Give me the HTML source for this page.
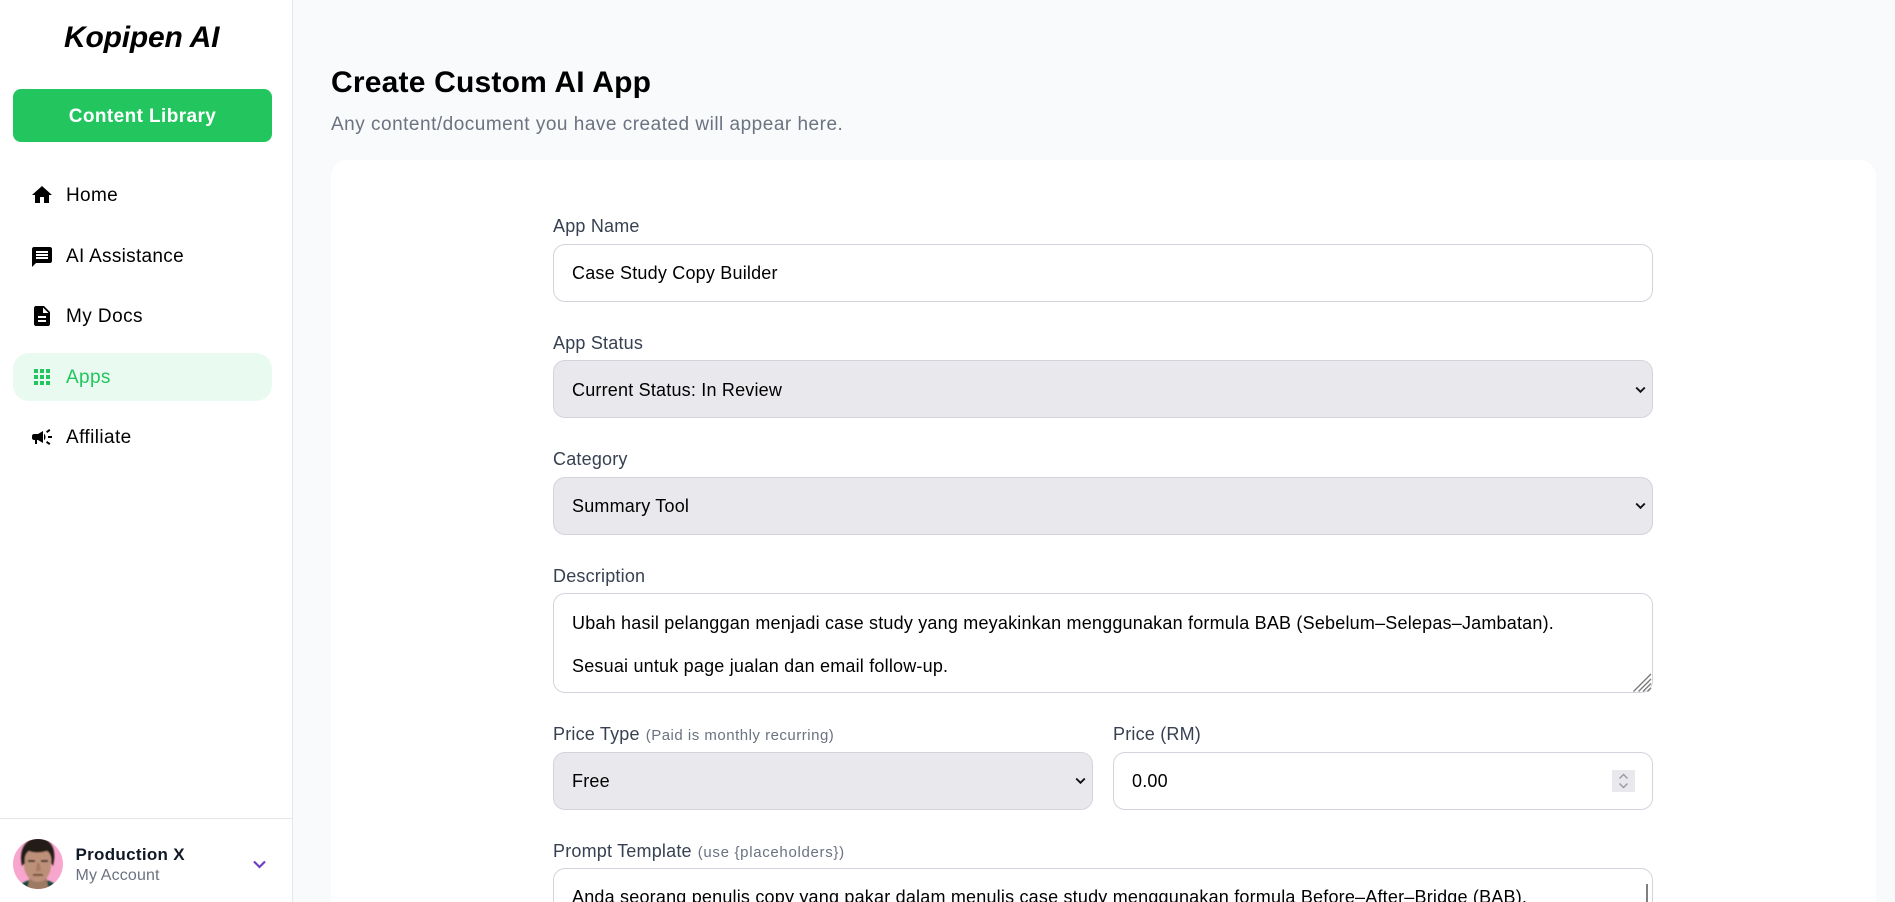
<!DOCTYPE html>
<html lang="en">
<head>
<meta charset="utf-8">
<title>Create Custom AI App</title>
<style>
*{box-sizing:border-box}
html,body{margin:0;padding:0;width:1895px;height:902px;overflow:hidden;background:#f9fafb;font-family:"Liberation Sans",Arial,sans-serif;color:#000}
#root{position:relative;width:1895px;height:902px;overflow:hidden;background:#f9fafb}
.abs,.t{position:absolute}
.t{white-space:nowrap;line-height:1}
aside{position:absolute;left:0;top:0;width:293px;height:902px;background:#fff;border-right:1px solid #e5e7eb}
.logo{left:64px;top:23px;font-size:30px;font-weight:bold;font-style:italic;letter-spacing:-.2px;line-height:30px}
.btn{position:absolute;left:13px;top:89px;width:259px;height:53px;background:#22c55e;border-radius:8px;color:#fff;font-weight:bold;font-size:19px;letter-spacing:.41px;text-align:center;line-height:55px}
.pill{position:absolute;left:13px;top:353px;width:259px;height:48px;background:#e9faf0;border-radius:16px}
.nav{font-size:19px;left:66px;line-height:20px}
svg.i{position:absolute;left:30px;width:24px;height:24px;fill:#000}
.foot{position:absolute;left:0;top:818px;width:292px;border-top:1px solid #e5e7eb}
.card{position:absolute;left:331px;top:160px;width:1545px;height:742px;background:#fff;border-radius:16px 16px 0 0}
.lbl{font-size:18px;color:#374151;line-height:20px;letter-spacing:.2px}
.lbl span{font-size:15px;color:#6b7280;letter-spacing:.5px;margin-left:6px}
input,select,textarea{position:absolute;font-family:"Liberation Sans",Arial,sans-serif;font-size:18px;color:#000;border:1px solid #d1d5db;border-radius:12px;letter-spacing:.2px;margin:0;outline:0}
input{background:#fff;padding:0 18px;height:58px}
select{background:#e9e9ed;padding:0 18px;height:58px;-webkit-appearance:none;appearance:none}
textarea{background:#fff;padding:19px 18px;line-height:21.5px;overflow:hidden;resize:none}
input[type=number]::-webkit-inner-spin-button,input[type=number]::-webkit-outer-spin-button{-webkit-appearance:none;margin:0}
.chev{position:absolute;width:11px;height:8px}
</style>
</head>
<body>
<div id="root">
<aside>
  <div class="t logo">Kopipen AI</div>
  <div class="btn">Content Library</div>
  <div class="pill"></div>

  <svg class="i" style="top:183px" viewBox="0 0 24 24"><path d="M10 20v-6h4v6h5v-8h3L12 3 2 12h3v8z"/></svg>
  <div class="t nav" style="top:186px;letter-spacing:.33px">Home</div>

  <svg class="i" style="top:245px" viewBox="0 0 24 24"><path d="M20 2H4c-1.100 0-1.990.9-1.990 2L2 22l4-4h14c1.100 0 2-.9 2-2V4c0-1.100-.9-2-2-2zm-2 12H6v-2h12v2zm0-3H6V9h12v2zm0-3H6V6h12v2z"/></svg>
  <div class="t nav" style="top:247px;letter-spacing:.3px">AI Assistance</div>

  <svg class="i" style="top:304px" viewBox="0 0 24 24"><path d="M14 2H6c-1.100 0-1.990.9-1.990 2L4 20c0 1.100.89 2 1.990 2H18c1.100 0 2-.9 2-2V8l-6-6zm2 16H8v-2h8v2zm0-4H8v-2h8v2zm-3-5V3.500L18.500 9H13z"/></svg>
  <div class="t nav" style="top:307px;letter-spacing:.44px">My Docs</div>

  <svg class="i" style="top:365px;fill:#22c55e" viewBox="0 0 24 24"><path d="M4 8h4V4H4v4zm6 12h4v-4h-4v4zm-6 0h4v-4H4v4zm0-6h4v-4H4v4zm6 0h4v-4h-4v4zm6-10v4h4V4h-4zm-6 4h4V4h-4v4zm6 6h4v-4h-4v4zm0 6h4v-4h-4v4z"/></svg>
  <div class="t nav" style="top:368px;letter-spacing:.35px;color:#22c55e">Apps</div>

  <svg class="i" style="top:425px" viewBox="0 0 24 24"><path d="M18 11v2h4v-2h-4zm-2 6.610c.96.71 2.210 1.650 3.200 2.390.4-.53.8-1.070 1.200-1.600-.99-.74-2.240-1.680-3.200-2.400-.4.54-.8 1.080-1.200 1.610zM20.400 5.600c-.4-.53-.8-1.070-1.200-1.600-.99.74-2.240 1.680-3.200 2.400.4.53.8 1.070 1.200 1.600.96-.72 2.210-1.650 3.200-2.400zM4 9c-1.100 0-2 .9-2 2v2c0 1.100.9 2 2 2h1v4h2v-4h1l5 3V6L8 9H4zm11.500 3c0-1.330-.58-2.530-1.500-3.350v6.690c.92-.81 1.500-2.010 1.500-3.340z"/></svg>
  <div class="t nav" style="top:428px;letter-spacing:.41px">Affiliate</div>

  <div class="foot"></div>
  <svg class="abs" style="left:13px;top:839px" width="50" height="50" viewBox="0 0 50 50">
    <defs>
      <clipPath id="c"><circle cx="25" cy="25" r="25"/></clipPath>
      <filter id="b" x="-10%" y="-10%" width="120%" height="120%"><feGaussianBlur stdDeviation=".7"/></filter>
    </defs>
    <g clip-path="url(#c)">
      <rect width="50" height="50" fill="#f9a6cf"/>
      <g filter="url(#b)">
        <path d="M5 52c1-7 7-10 12-11h16c5 1 11 4 12 11z" fill="#174a3a"/>
        <path d="M17 36h16l3 16H14z" fill="#9c7a64"/>
        <path d="M11 17c0-9 6-13 14-13s13 4 13 13v9c0 10-6 17-13 17s-14-7-14-17z" fill="#bd9079"/>
        <path d="M9 27C5 9 14-1 25-1s20 9 15 28l-2-3c1-6-1-10-4-12-7 2-13 2-18 0-3 2-5 6-4 12z" fill="#241a18"/>
        <path d="M15 21h7v2h-7zM28 21h7v2h-7z" fill="#3a2a25"/>
        <path d="M24 24h2.500l1.500 8h-5z" fill="#a67a63"/>
        <rect x="20" y="35" width="10" height="1.800" fill="#6a4234"/>
      </g>
    </g>
  </svg>
  <div class="t" style="left:75.500px;top:846px;font-size:17px;font-weight:bold;letter-spacing:.3px;line-height:18px;color:#111827">Production X</div>
  <div class="t" style="left:75.500px;top:867px;font-size:16px;letter-spacing:.14px;line-height:18px;color:#6b7280">My Account</div>
  <svg class="abs" style="left:252px;top:859px" width="15" height="11" viewBox="0 0 15 11"><path d="M2 2.500l5.500 5.500L13 2.500" fill="none" stroke="#6d3fc4" stroke-width="2.200"/></svg>
</aside>

<div class="t" style="left:331px;top:66px;font-size:30px;font-weight:bold;letter-spacing:.2px;line-height:34px">Create Custom AI App</div>
<div class="t" style="left:331px;top:115px;font-size:19px;letter-spacing:.5px;color:#6b7280;line-height:20px">Any content/document you have created will appear here.</div>

<div class="card"></div>

<div class="t lbl" style="left:553px;top:216px">App Name</div>
<input type="text" value="Case Study Copy Builder" style="left:553px;top:244px;width:1100px">

<div class="t lbl" style="left:553px;top:333px">App Status</div>
<select style="left:553px;top:360px;width:1100px;padding-top:1px"><option>Current Status: In Review</option></select>
<svg class="chev" style="left:1635px;top:386px" viewBox="0 0 11 8"><path d="M1.200 1.500l4.300 4.300 4.300-4.300" fill="none" stroke="#111" stroke-width="1.900"/></svg>

<div class="t lbl" style="left:553px;top:449px">Category</div>
<select style="left:553px;top:477px;width:1100px"><option>Summary Tool</option></select>
<svg class="chev" style="left:1635px;top:502px" viewBox="0 0 11 8"><path d="M1.200 1.500l4.300 4.300 4.300-4.300" fill="none" stroke="#111" stroke-width="1.900"/></svg>

<div class="t lbl" style="left:553px;top:566px">Description</div>
<textarea style="left:553px;top:593px;width:1100px;height:100px">Ubah hasil pelanggan menjadi case study yang meyakinkan menggunakan formula BAB (Sebelum–Selepas–Jambatan).

Sesuai untuk page jualan dan email follow-up.</textarea>
<svg class="abs" style="left:1632px;top:672px" width="20" height="20" viewBox="0 0 20 20"><path d="M1.500 19.500L19 2M6.500 19.500L19 7M11 19.500L19 11.500M15.500 19.500L19 16" fill="none" stroke="#777" stroke-width="1.300"/></svg>

<div class="t lbl" style="left:553px;top:724px">Price Type<span>(Paid is monthly recurring)</span></div>
<select style="left:553px;top:752px;width:540px"><option>Free</option></select>
<svg class="chev" style="left:1075px;top:777px" viewBox="0 0 11 8"><path d="M1.200 1.500l4.300 4.300 4.300-4.300" fill="none" stroke="#111" stroke-width="1.900"/></svg>

<div class="t lbl" style="left:1113px;top:724px">Price (RM)</div>
<input type="number" value="0.00" style="left:1113px;top:752px;width:540px">
<div class="abs" style="left:1612px;top:770px;width:23px;height:22px;background:#e9e9ed"></div>
<svg class="abs" style="left:1612px;top:770px" width="23" height="22" viewBox="0 0 23 22"><path d="M7.500 8.500l4-4 4 4M7.500 13.500l4 4 4-4" fill="none" stroke="#9a9aa6" stroke-width="1.500"/></svg>

<div class="t lbl" style="left:553px;top:841px">Prompt Template<span style="letter-spacing:.68px">(use {placeholders})</span></div>
<textarea style="left:553px;top:868px;width:1100px;height:34px;padding-top:18px;padding-bottom:0;border-bottom:0;border-radius:12px 12px 0 0">Anda seorang penulis copy yang pakar dalam menulis case study menggunakan formula Before–After–Bridge (BAB).</textarea>
<div class="abs" style="left:1646px;top:884px;width:2px;height:18px;background:#7f7f7f"></div>
</div>
</body>
</html>
